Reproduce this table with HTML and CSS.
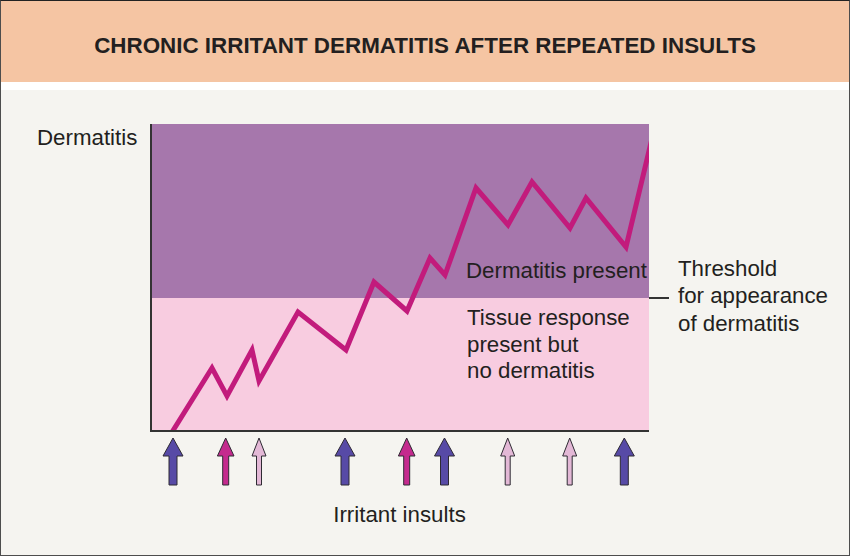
FILE: index.html
```html
<!DOCTYPE html>
<html lang="en">
<head>
<meta charset="utf-8">
<title>Chronic irritant dermatitis after repeated insults</title>
<link rel="stylesheet" href="styles.css">
</head>
<body>
<div class="frame">
  <header class="header">
    <h1 class="title">CHRONIC IRRITANT DERMATITIS AFTER REPEATED INSULTS</h1>
  </header>
  <div class="divider"></div>
  <main class="content">
    <div class="y-label">Dermatitis</div>
    <div class="chart">
      <div class="zone zone-present">
        <span class="zone-text">Dermatitis present</span>
      </div>
      <div class="zone zone-tissue">
        <span class="zone-text">Tissue response<br>present but<br>no dermatitis</span>
      </div>
      <svg class="plot" viewBox="152 124 497 306" preserveAspectRatio="none" aria-hidden="true">
        <polyline fill="none" stroke="#c21b7c" stroke-width="5" stroke-linejoin="miter" stroke-miterlimit="10"
          points="171.5,433 212,368 227,396 252,350 259,381 298,312 346,350 374,282 407,311 430,258 445,275 476,188 508,225 532,182 570,228 586,198 626,247 655,126"/>
      </svg>
    </div>
    <div class="threshold">
      <span></span><span class="t-line">Threshold</span>
      <span class="dash"></span><span class="t-line">for appearance</span>
      <span></span><span class="t-line">of dermatitis</span>
    </div>
    <svg class="arrows" viewBox="150 432 499 56" aria-hidden="true">
      <g stroke="#2e2a33" stroke-width="1" stroke-linejoin="miter">
        <path class="a-blue" d="M173 438 L183 456 L177 456 L177 485 L169 485 L169 456 L163 456 Z"/>
        <path class="a-mag" d="M225.7 438 L234 456 L228.7 456 L228.7 485 L222.7 485 L222.7 456 L217.4 456 Z"/>
        <path class="a-light" d="M259 438 L266 456 L261.5 456 L261.5 485 L256.5 485 L256.5 456 L252 456 Z"/>
        <path class="a-blue" d="M345 438 L355 456 L349 456 L349 485 L341 485 L341 456 L335 456 Z"/>
        <path class="a-mag" d="M406.7 438 L415 456 L409.7 456 L409.7 485 L403.7 485 L403.7 456 L398.4 456 Z"/>
        <path class="a-blue" d="M444.5 438 L454.5 456 L448.5 456 L448.5 485 L440.5 485 L440.5 456 L434.5 456 Z"/>
        <path class="a-light" d="M507.7 438 L514.7 456 L510.2 456 L510.2 485 L505.2 485 L505.2 456 L500.7 456 Z"/>
        <path class="a-light" d="M569.7 438 L576.7 456 L572.2 456 L572.2 485 L567.2 485 L567.2 456 L562.7 456 Z"/>
        <path class="a-blue" d="M624.3 438 L634.3 456 L628.3 456 L628.3 485 L620.3 485 L620.3 456 L614.3 456 Z"/>
      </g>
    </svg>
    <div class="x-label">Irritant insults</div>
  </main>
</div>
</body>
</html>
```
FILE: styles.css
```css
* { box-sizing: border-box; }

html, body {
  margin: 0;
  padding: 0;
  background: #f5f4f0;
}

body {
  font-family: "Liberation Sans", Arial, Helvetica, sans-serif;
  color: #231f20;
}

.frame {
  width: 850px;
  height: 556px;
  border: 1px solid #4d4d4d;
  border-top-color: #222;
  display: flex;
  flex-direction: column;
  background: #f5f4f0;
  overflow: hidden;
}

.header {
  height: 81px;
  flex: none;
  background: #f5c5a3;
  padding-top: 32px;
}

.title {
  margin: 0;
  font-size: 22.4px;
  line-height: 25px;
  font-weight: bold;
  text-align: center;
  color: #231f20;
}

.divider {
  height: 8px;
  flex: none;
  background: #ffffff;
}

.content {
  flex: 1;
  display: grid;
  grid-template-columns: 149px 499px 1fr;
  grid-template-rows: 308px 56px auto;
  padding-top: 34px;
}

.y-label {
  grid-column: 1;
  grid-row: 1;
  font-size: 22.3px;
  line-height: 27px;
  padding-left: 36px;
}

.chart {
  grid-column: 2;
  grid-row: 1;
  position: relative;
  display: flex;
  flex-direction: column;
  border-left: 2px solid #333;
  border-bottom: 2px solid #333;
}

.zone {
  font-size: 22.3px;
  position: relative;
  z-index: 1;
}

.zone-present {
  height: 174px;
  background: #a677ac;
  display: flex;
  align-items: flex-end;
  padding: 0 0 14px 314px;
  line-height: 27px;
}

.zone-tissue {
  flex: 1;
  background: #f8cce0;
  padding: 7px 0 0 315px;
  line-height: 26.5px;
}

.zone-text {
  white-space: nowrap;
}

.plot {
  position: absolute;
  left: 0;
  top: 0;
  width: 497px;
  height: 306px;
  z-index: 2;
  overflow: hidden;
  pointer-events: none;
}

.threshold {
  grid-column: 3;
  grid-row: 1;
  margin-top: 131px;
  display: grid;
  grid-template-columns: 20px auto;
  column-gap: 9px;
  align-content: start;
  font-size: 22.3px;
  line-height: 27.3px;
}

.t-line {
  white-space: nowrap;
}

.dash {
  align-self: start;
  margin-top: 15px;
  height: 1.5px;
  background: #333;
}

.arrows {
  grid-column: 2;
  grid-row: 2;
  width: 499px;
  height: 56px;
  display: block;
}

.a-blue { fill: #574aa6; }
.a-mag { fill: #c42a8e; }
.a-light { fill: #e3b8d6; }

.x-label {
  grid-column: 2;
  grid-row: 3;
  text-align: center;
  font-size: 22.3px;
  line-height: 27px;
  padding-top: 13px;
}
```
